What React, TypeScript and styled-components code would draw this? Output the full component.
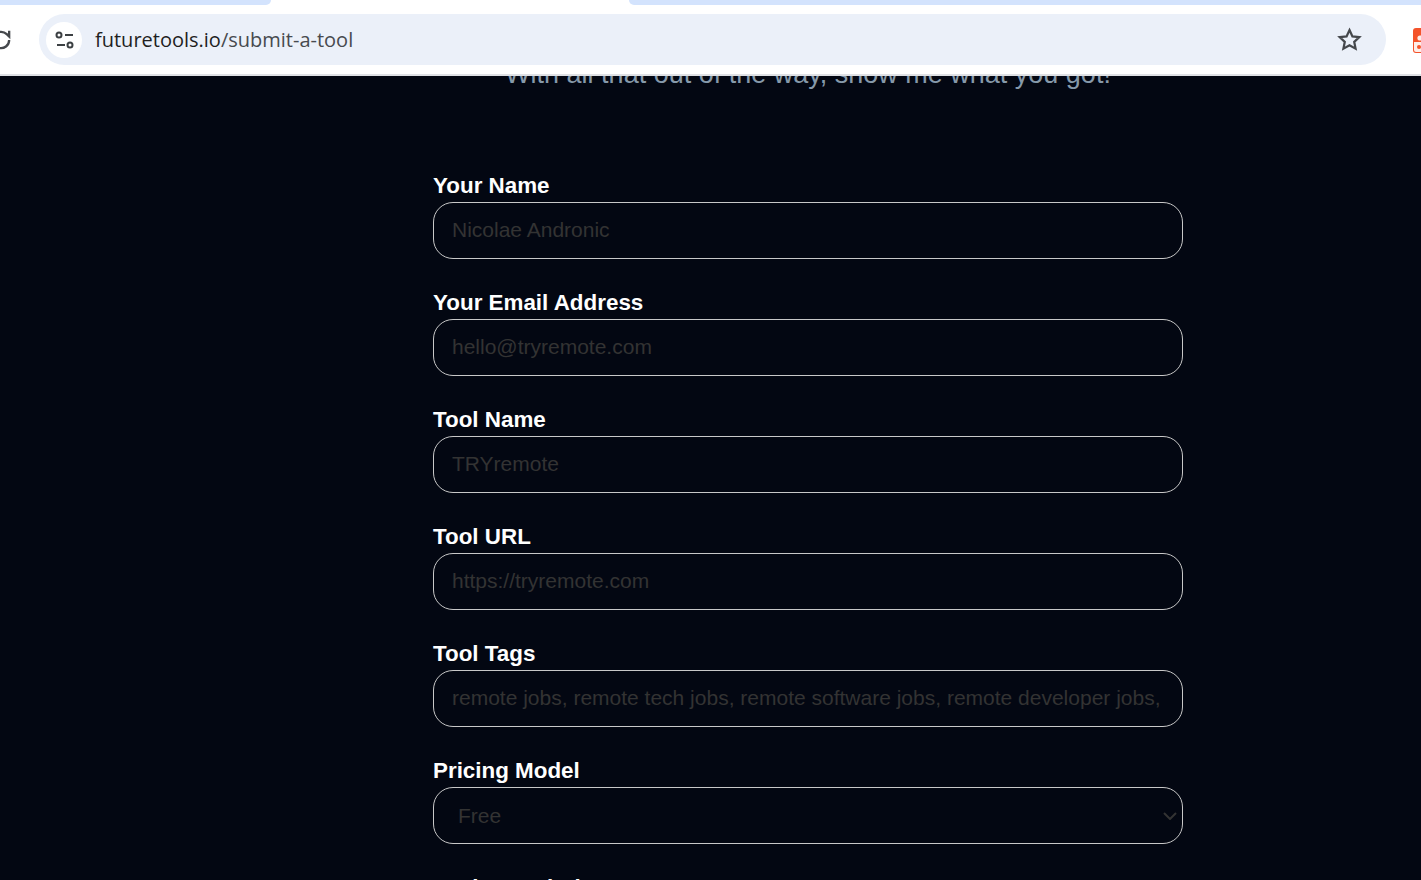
import styled, { createGlobalStyle } from "styled-components";

const fields = [
  { label: "Your Name", placeholder: "Nicolae Andronic" },
  { label: "Your Email Address", placeholder: "hello@tryremote.com" },
  { label: "Tool Name", placeholder: "TRYremote" },
  { label: "Tool URL", placeholder: "https://tryremote.com" },
  {
    label: "Tool Tags",
    placeholder:
      "remote jobs, remote tech jobs, remote software jobs, remote developer jobs, remote design jobs",
  },
];

const chevron = encodeURIComponent(
  '<svg xmlns="http://www.w3.org/2000/svg" width="14" height="8" viewBox="0 0 14 8"><path d="M1 1l6 6 6-6" fill="none" stroke="#333333" stroke-width="2"/></svg>'
);

const App = () => {
  return (
    <Page>
      <GlobalStyle />
      <Browser>
        <TabStrip>
          <Tab />
          <ActiveGap />
          <Tab $grow />
        </TabStrip>
        <Toolbar>
          <Reload viewBox="0 0 24 24">
            <path d="M19 12a7 7 0 1 1-2.1-5L19 9V4" />
          </Reload>
          <AddressBar>
            <SiteBadge>
              <svg width="20" height="20" viewBox="0 0 20 20" fill="none" stroke="#3c4043" strokeWidth="2">
                <circle cx="5" cy="5" r="2.5" />
                <path d="M11 5h8" />
                <circle cx="16" cy="15" r="2.5" />
                <path d="M3 15h8" />
              </svg>
            </SiteBadge>
            <Url>
              <strong>futuretools.io</strong>/submit-a-tool
            </Url>
            <Star viewBox="0 0 24 24">
              <path d="M12 3.6l2.6 5.6 6.1.7-4.5 4.2 1.2 6L12 17.1l-5.4 3 1.2-6-4.5-4.2 6.1-.7z" />
            </Star>
          </AddressBar>
          <Extension>
            <svg width="16" height="25" viewBox="0 0 16 25">
              <rect x="0" y="0" width="16" height="25" rx="3" fill="#f4532a" />
              <path d="M1 14h15v10H3a2 2 0 0 1-2-2z" fill="#fdeee9" />
              <circle cx="7" cy="10" r="2.6" fill="#fdeee9" />
              <circle cx="6" cy="19" r="2" fill="#f4532a" />
            </svg>
          </Extension>
        </Toolbar>
      </Browser>
      <Content>
        <Subtitle>With all that out of the way, show me what you got!</Subtitle>
        <Form>
          {fields.map((field) => (
            <Field key={field.label}>
              <Label>{field.label}</Label>
              <Input placeholder={field.placeholder} />
            </Field>
          ))}
          <Field>
            <Label>Pricing Model</Label>
            <Select defaultValue="Free">
              <option>Free</option>
              <option>Freemium</option>
              <option>Paid</option>
            </Select>
          </Field>
          <Field>
            <Label>Tool Description</Label>
          </Field>
        </Form>
      </Content>
    </Page>
  );
};

export default App;

const GlobalStyle = createGlobalStyle`
  html, body {
    margin: 0;
    padding: 0;
    height: 100%;
    overflow: hidden;
    background: #030712;
  }
`;

const Page = styled.div`
  width: 1421px;
  height: 880px;
  display: flex;
  flex-direction: column;
  overflow: hidden;
  font-family: "Liberation Sans", Arial, sans-serif;
`;

const Browser = styled.div`
  flex: none;
  height: 76px;
  box-sizing: border-box;
  background: #ffffff;
  border-bottom: 2px solid #dfe1e5;
`;

const TabStrip = styled.div`
  height: 5px;
  display: flex;
  overflow: hidden;
`;

const Tab = styled.div<{ $grow?: boolean }>`
  width: 271px;
  flex: ${(p) => (p.$grow ? 1 : "none")};
  background: #d3e3fd;
  border-radius: ${(p) => (p.$grow ? "0 0 0 10px" : "0 0 10px 0")};
`;

const ActiveGap = styled.div`
  width: 358px;
  background: #ffffff;
`;

const Toolbar = styled.div`
  height: 69px;
  display: flex;
  align-items: flex-start;
  padding-top: 9px;
  box-sizing: border-box;
`;

const Reload = styled.svg`
  width: 28px;
  height: 28px;
  margin: 12px 24px 0 -13px;
  flex: none;
  fill: none;
  stroke: #45484c;
  stroke-width: 2;
`;

const AddressBar = styled.div`
  width: 1347px;
  height: 51px;
  flex: none;
  display: flex;
  align-items: center;
  background: #ebf0f9;
  border-radius: 26px;
  padding: 0 23px 0 7px;
  box-sizing: border-box;
`;

const SiteBadge = styled.div`
  width: 36px;
  height: 36px;
  flex: none;
  border-radius: 50%;
  background: #ffffff;
  display: flex;
  align-items: center;
  justify-content: center;
`;

const Url = styled.div`
  flex: 1;
  margin-left: 13px;
  font-family: "Open Sans", "Noto Sans", sans-serif;
  font-size: 20px;
  color: #474a4f;

  strong {
    font-weight: 400;
    color: #1f1f1f;
  }
`;

const Star = styled.svg`
  width: 27px;
  height: 27px;
  flex: none;
  fill: none;
  stroke: #45484c;
  stroke-width: 2;
`;

const Extension = styled.div`
  margin: 14px 0 0 27px;
  flex: none;
`;

const Content = styled.main`
  flex: 1;
  min-height: 0;
  overflow: hidden;
  background: #030712;
`;

const Subtitle = styled.p`
  margin: -18px 0 0;
  padding-left: 195px;
  font-size: 27px;
  line-height: 32px;
  text-align: center;
  color: #8699aa;
`;

const Form = styled.form`
  width: 750px;
  margin: 82px 0 0 433px;
  display: flex;
  flex-direction: column;
  gap: 30px;
`;

const Field = styled.div`
  display: flex;
  flex-direction: column;
`;

const Label = styled.label`
  font-size: 22.4px;
  line-height: 28px;
  padding-bottom: 2px;
  font-weight: 700;
  color: #ffffff;
`;

const controlStyles = `
  width: 100%;
  height: 57px;
  box-sizing: border-box;
  padding: 0 18px 2px;
  background: transparent;
  border: 1px solid #c8c8c8;
  border-radius: 20px;
  font-family: "Liberation Sans", Arial, sans-serif;
  font-size: 21px;
  color: #333333;
  outline: none;
`;

const Input = styled.input`
  ${controlStyles}

  &::placeholder {
    color: #333333;
    opacity: 1;
  }
`;

const Select = styled.select`
  ${controlStyles}
  padding-left: 24px;
  padding-bottom: 0;
  appearance: none;
  background: url("data:image/svg+xml,${chevron}") no-repeat right 5px center;
`;
